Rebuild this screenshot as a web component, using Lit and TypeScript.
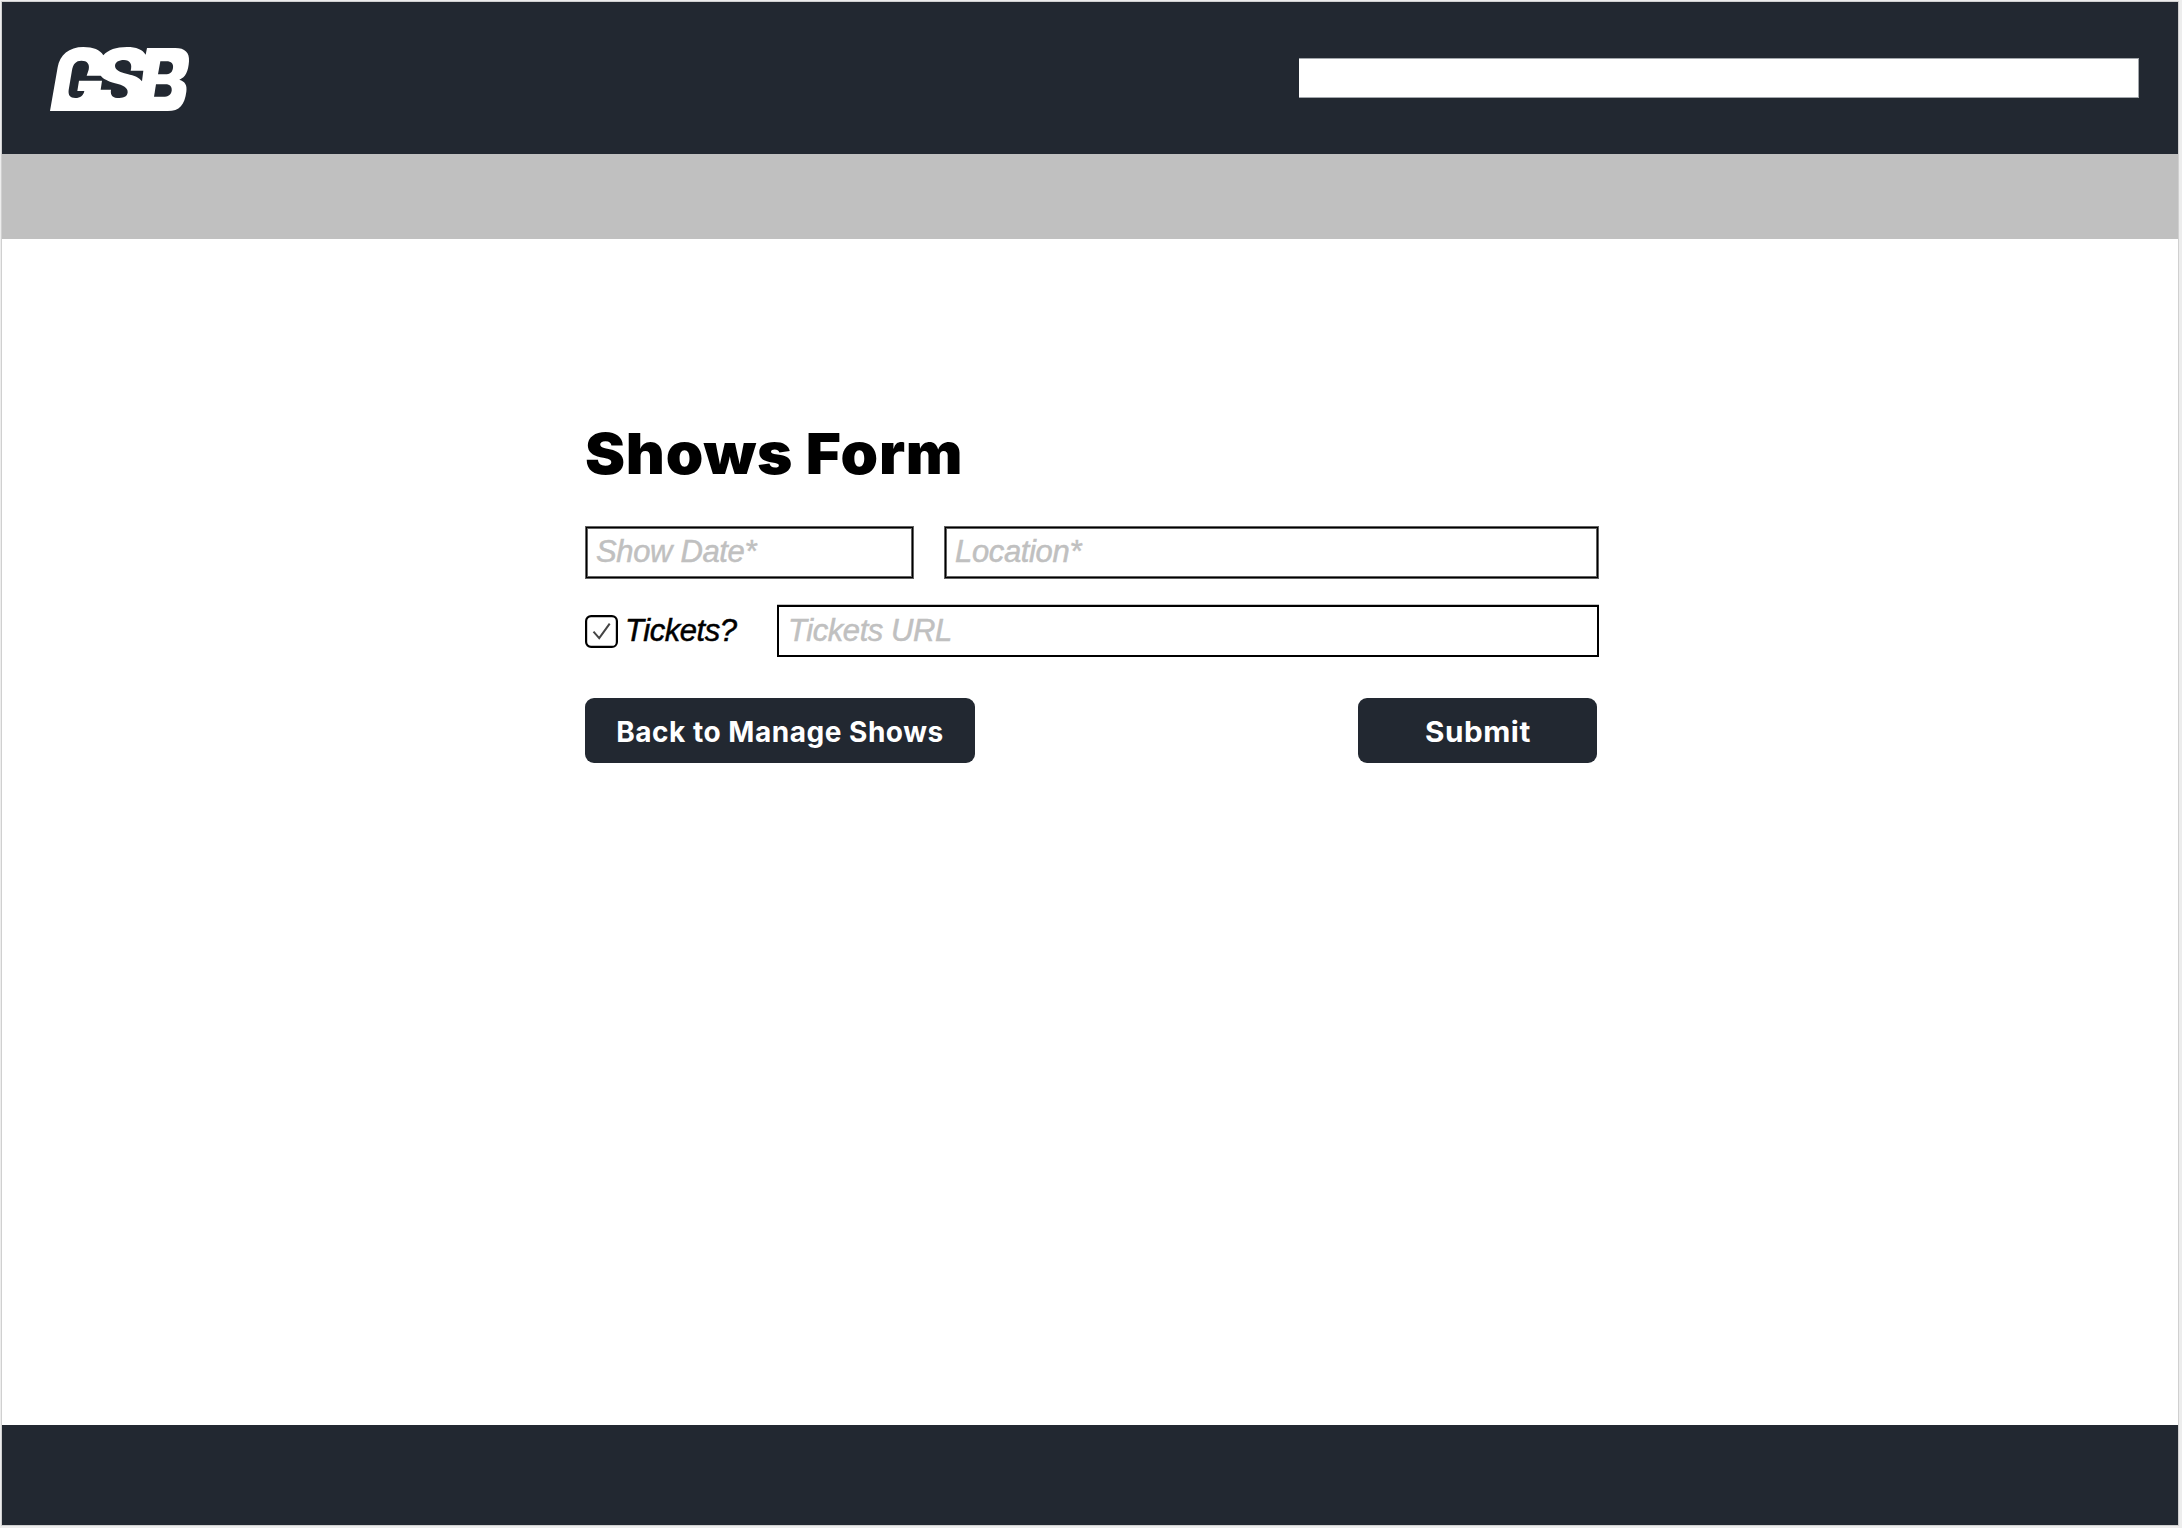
import { LitElement, html, svg, css } from "lit";
import { customElement, state } from "lit/decorators.js";

@customElement("gsb-logo")
class GsbLogo extends LitElement {
  static styles = css`
    :host { display: block; width: 180px; height: 100px; }
    .mark { display: block; width: 180px; height: 100px; }
    .solid { fill: #fff; }
    .cut { fill: #222831; }
  `;
  render() {
    return html`
      <svg class="mark" viewBox="0 0 540 300" role="img" aria-label="GSB">
        <path class="solid" d="M60 243 L83 112 C89 75 117 51 160 51 C190 51 210 59 220 76 C235 59 258 51 291 51 C319 51 338 59 347 74 L351 54 H436 C465 54 479 68 477 94 C475 124 467 142 448 149 C465 154 472 165 469 185 C464 224 449 243 413 243 Z" />
        <path class="cut" d="M170 137 H212 C219 146 233 153 255 160 C280 166 294 173 293 187 C292 198 284 204 268 204 C249 204 240 197 243 179 H212 L216 152 H147 L142 183 H163 C160 197 151 204 136 204 C120 204 114 195 116 180 L126 121 C129 102 138 92 154 92 C172 92 180 102 176 119 Z" />
        <path class="cut" d="M302 122 H340 L336 154 C327 142 314 137 292 132 C268 127 256 120 255 108 C255 97 266 90 282 90 C300 90 308 103 302 122 Z" />
        <path class="cut" d="M391 94 H409 C424 94 431 102 429 114 C427 127 420 133 405 133 H384 Z" />
        <path class="cut" d="M378 163 H406 C421 163 426 171 425 182 C423 194 415 200 399 200 H372 Z" />
      </svg>
    `;
  }
}

@customElement("app-root")
class AppRoot extends LitElement {
  @state() private hasTickets = true;

  static styles = css`
    :host {
      display: block;
      box-sizing: border-box;
      height: 1528px;
      padding: 1px 3px 2px 1px;
      background: #ededed;
      font-family: "Liberation Sans", Arial, sans-serif;
    }
    .page {
      box-sizing: border-box;
      height: 100%;
      display: flex;
      flex-direction: column;
      border: 1px solid #d0d0d0;
      background: #fff;
    }
    .header {
      flex: none;
      box-sizing: border-box;
      height: 152px;
      padding: 28px 39px 0 28px;
      display: flex;
      align-items: flex-start;
      justify-content: space-between;
      background: #222831;
    }
    .search {
      box-sizing: border-box;
      width: 840px;
      height: 40px;
      margin-top: 28px;
      background: #fff;
      border: solid #a3a7ac;
      border-width: 1px 1px 1px 0;
    }
    .band { flex: none; height: 85px; background: #c0c0c0; }
    .main { flex: 1; padding: 185px 0 0 583px; }
    .footer { flex: none; height: 100px; background: #222831; }
    .form { width: 1014px; }
    .title {
      margin: 0;
      width: max-content;
      height: 60px;
      font: 900 57px/60px Inter, sans-serif;
      letter-spacing: 0.7px;
      white-space: nowrap;
      color: #000;
      transform: scaleX(1.056);
      transform-origin: left;
    }
    .row { display: flex; }
    .first { margin-top: 42px; gap: 30px; }
    .second { margin-top: 26px; align-items: center; justify-content: space-between; }
    .actions { margin-top: 41px; justify-content: space-between; padding-right: 2px; }
    .field {
      box-sizing: border-box;
      height: 53px;
      padding: 0 8px 1px;
      display: flex;
      align-items: center;
      border: 1px solid #626262;
      box-shadow: inset 0 0 0 1px #000, inset 0 0 0 2px #626262;
      color: #c0c0c0;
      font-size: 31px;
      font-style: italic;
      letter-spacing: -0.35px;
      white-space: nowrap;
      -webkit-text-stroke: 0.5px currentColor;
    }
    .date { width: 329px; padding-left: 10px; }
    .location { width: 655px; padding-left: 10px; }
    .url {
      width: 822px;
      height: 52px;
      padding: 0 9px;
      border: 2px solid #000;
      box-shadow: 0 -1px 0 #c4c4c4;
      letter-spacing: -0.43px;
    }
    .tickets {
      display: flex;
      align-items: center;
      gap: 7px;
      font-size: 31px;
      font-style: italic;
      letter-spacing: -0.45px;
      color: #000;
      -webkit-text-stroke: 0.5px currentColor;
    }
    .box { width: 33px; height: 33px; }
    .frame { fill: #fff; stroke: #000; stroke-width: 2.2; }
    .tick { fill: none; stroke: #444; stroke-width: 2; }
    .button {
      box-sizing: border-box;
      height: 65px;
      padding: 2px 0 0;
      border: 0;
      border-radius: 9px;
      background: #222831;
      color: #fff;
      font: 700 28px Inter, sans-serif;
      white-space: nowrap;
    }
    .back { width: 390px; letter-spacing: 0.52px; }
    .submit { width: 239px; letter-spacing: 0.5px; }
    .wide { display: inline-block; transform: scaleX(1.06); }
  `;

  render() {
    return html`
      <div class="page">
        <header class="header">
          <gsb-logo></gsb-logo>
          <div class="search"></div>
        </header>
        <div class="band"></div>
        <main class="main">
          <div class="form">
            <h1 class="title">Shows Form</h1>
            <div class="row first">
              <div class="field date">Show Date*</div>
              <div class="field location">Location*</div>
            </div>
            <div class="row second">
              <div class="tickets" @click=${() => (this.hasTickets = !this.hasTickets)}>
                <svg class="box" viewBox="0 0 33 33">
                  <rect class="frame" x="1.1" y="1.1" width="30.8" height="30.8" rx="5" />
                  ${this.hasTickets ? svg`<path class="tick" d="M8.5 16.7 L14.2 23.2 L24.7 8.6" />` : ""}
                </svg>
                <span>Tickets?</span>
              </div>
              <div class="field url">Tickets URL</div>
            </div>
            <div class="row actions">
              <button class="button back">Back to Manage Shows</button>
              <button class="button submit"><span class="wide">Submit</span></button>
            </div>
          </div>
        </main>
        <footer class="footer"></footer>
      </div>
    `;
  }
}
